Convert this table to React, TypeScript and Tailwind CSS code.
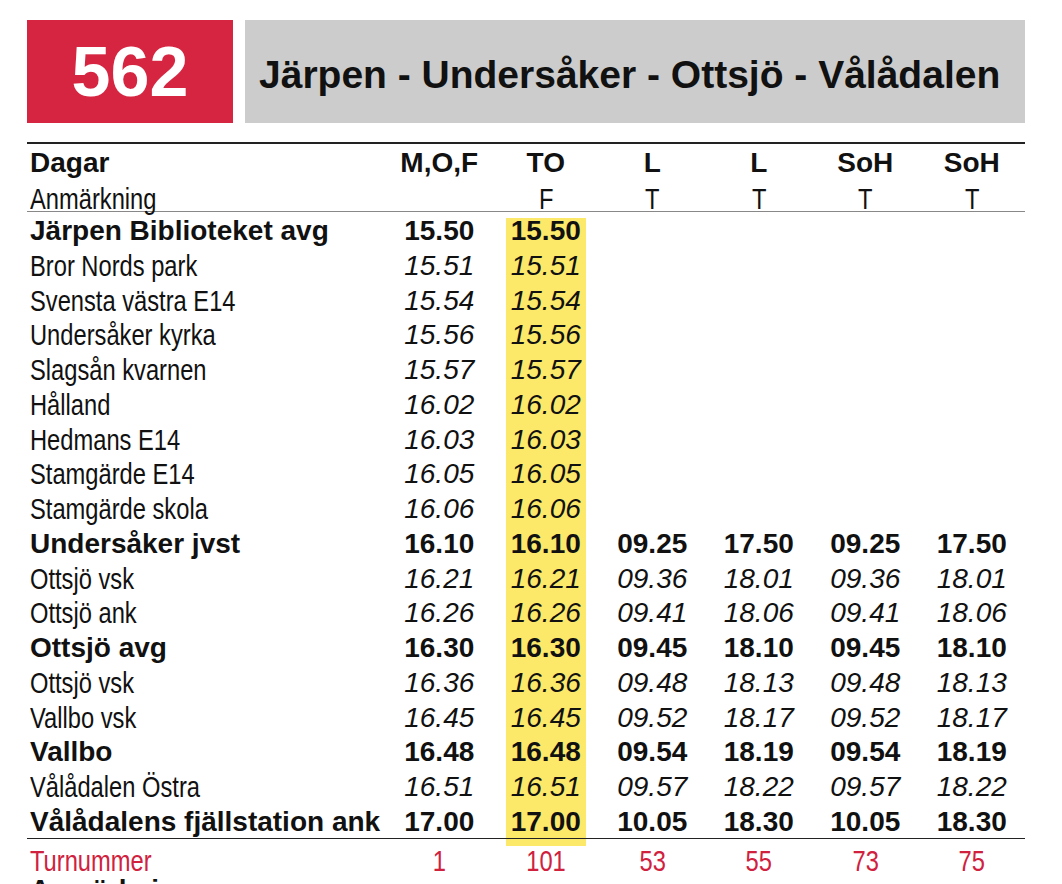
import React from "react";

type Row = { name: string; bold?: boolean; times: string[] };

const rows: Row[] = [
  { name: "Järpen Biblioteket avg", bold: true, times: ["15.50", "15.50"] },
  { name: "Bror Nords park", times: ["15.51", "15.51"] },
  { name: "Svensta västra E14", times: ["15.54", "15.54"] },
  { name: "Undersåker kyrka", times: ["15.56", "15.56"] },
  { name: "Slagsån kvarnen", times: ["15.57", "15.57"] },
  { name: "Hålland", times: ["16.02", "16.02"] },
  { name: "Hedmans E14", times: ["16.03", "16.03"] },
  { name: "Stamgärde E14", times: ["16.05", "16.05"] },
  { name: "Stamgärde skola", times: ["16.06", "16.06"] },
  { name: "Undersåker jvst", bold: true, times: ["16.10", "16.10", "09.25", "17.50", "09.25", "17.50"] },
  { name: "Ottsjö vsk", times: ["16.21", "16.21", "09.36", "18.01", "09.36", "18.01"] },
  { name: "Ottsjö ank", times: ["16.26", "16.26", "09.41", "18.06", "09.41", "18.06"] },
  { name: "Ottsjö avg", bold: true, times: ["16.30", "16.30", "09.45", "18.10", "09.45", "18.10"] },
  { name: "Ottsjö vsk", times: ["16.36", "16.36", "09.48", "18.13", "09.48", "18.13"] },
  { name: "Vallbo vsk", times: ["16.45", "16.45", "09.52", "18.17", "09.52", "18.17"] },
  { name: "Vallbo", bold: true, times: ["16.48", "16.48", "09.54", "18.19", "09.54", "18.19"] },
  { name: "Vålådalen Östra", times: ["16.51", "16.51", "09.57", "18.22", "09.57", "18.22"] },
  { name: "Vålådalens fjällstation ank", bold: true, times: ["17.00", "17.00", "10.05", "18.30", "10.05", "18.30"] },
];

const days = ["M,O,F", "TO", "L", "L", "SoH", "SoH"];
const notes = ["", "F", "T", "T", "T", "T"];
const turns = ["1", "101", "53", "55", "73", "75"];

const grid = "grid grid-cols-[359px_repeat(6,1fr)]";

// condensed face: no narrow font installed, so squeeze the regular one
function Narrow({ children, center }: { children: React.ReactNode; center?: boolean }) {
  return (
    <span
      className={`inline-block whitespace-nowrap text-[30px] scale-x-[0.79] ${center ? "origin-center" : "origin-left"}`}
    >
      {children}
    </span>
  );
}

export default function App() {
  return (
    <div className="min-h-[884px] bg-white font-['Liberation_Sans',Arial,sans-serif] text-[#111]">
      <div className="ml-[27px] w-[998px] pt-[20px]">
        {/* route header */}
        <div className="flex h-[103px] gap-[12px]">
          <div className="flex w-[206px] items-center justify-center bg-[#d52541] text-[70px] font-bold leading-none text-white">
            562
          </div>
          <div className="flex flex-1 items-center bg-[#cccccc] pl-[14px] pt-[6px] text-[39px] font-bold leading-none">
            Järpen - Undersåker - Ottsjö - Vålådalen
          </div>
        </div>

        <div className="mt-[19px] border-t-2 border-[#222]">
          <div className={`${grid} pt-[5px] text-[28px] font-bold leading-none`}>
            <div className="pl-[3px]">Dagar</div>
            {days.map((d, i) => (
              <div key={i} className="text-center">
                {d}
              </div>
            ))}
          </div>
          <div className={`${grid} h-[35px] border-b border-[#888] pt-[7px] text-[28px] leading-none`}>
            <div className="pl-[3px]">
              <Narrow>Anmärkning</Narrow>
            </div>
            {notes.map((n, i) => (
              <div key={i} className="text-center">
                <Narrow center>{n}</Narrow>
              </div>
            ))}
          </div>
        </div>

        <div>
          {rows.map((r, ri) => (
            <div key={ri} className={`${grid} h-[34.75px] text-[28px] leading-[30.75px]`}>
              <div className={`pl-[3px] pt-[4px] whitespace-nowrap ${r.bold ? "font-bold" : ""}`}>
                {r.bold ? r.name : <Narrow>{r.name}</Narrow>}
              </div>
              {Array.from({ length: 6 }).map((_, ci) => {
                const t = r.times[ci] ?? "";
                const yellow =
                  ci === 1
                    ? ri === 0
                      ? "bg-[linear-gradient(to_bottom,#fff_6px,#fce96a_6px)]"
                      : "bg-[#fce96a]"
                    : "";
                return (
                  <div key={ci} className="flex justify-center">
                    <div className={`w-[80px] pt-[4px] text-center ${yellow} ${r.bold ? "font-bold" : "italic"}`}>
                      {t}
                    </div>
                  </div>
                );
              })}
            </div>
          ))}
        </div>

        <div className={`${grid} h-[37px] border-t-[1.5px] border-[#222] text-[28px] leading-none text-[#d0213e]`}>
          <div className="pl-[3px] pt-[7px]">
            <Narrow>Turnummer</Narrow>
          </div>
          {turns.map((t, i) => (
            <div key={i} className="flex flex-col items-center">
              <div className={`h-[7px] w-[80px] shrink-0 ${i === 1 ? "bg-[#fce96a]" : ""}`} />
              <Narrow center>{t}</Narrow>
            </div>
          ))}
        </div>

        <div className="mt-[1px] pl-[3px] text-[28px] font-bold leading-none">Anmärkningar</div>
      </div>
    </div>
  );
}
